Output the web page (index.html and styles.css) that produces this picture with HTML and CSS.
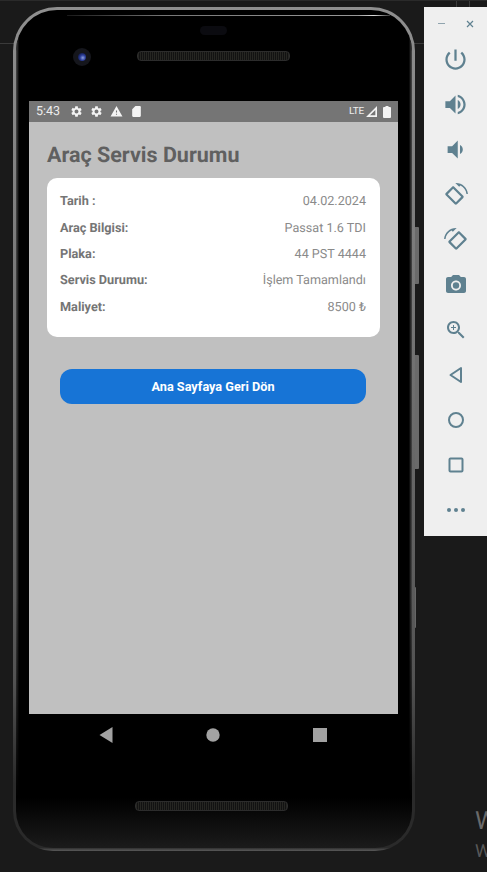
FILE: index.html
```html
<!DOCTYPE html>
<html lang="en">
<head>
    <meta charset="UTF-8">
    <meta name="viewport" content="width=device-width, initial-scale=1.0">
    <title>Araç Servis Durumu</title>
    <link rel="stylesheet" href="styles.css">
</head>
<body>
    <div class="desktop">
        <div class="grid-line line-left"></div>
        <div class="grid-line line-right"></div>
        <div class="grid-line line-top-a"></div>
        <div class="grid-line line-top-b"></div>

        <!-- emulator window -->
        <div class="phone">
            <div class="side-key key-one"></div>
            <div class="side-key key-two"></div>
            <div class="side-key key-three"></div>
            <div class="top-glint"></div>
            <div class="bezel-top">
                <div class="sensor"></div>
                <div class="camera"><span class="lens"></span></div>
                <div class="speaker speaker-top"></div>
            </div>
            <div class="screen">
                <div class="status-bar">
                    <span class="clock">5:43</span>
                    <svg class="status-icon" viewBox="0 0 24 24"><path d="M19.14 12.94c.04-.3.06-.61.06-.94 0-.32-.02-.64-.07-.94l2.03-1.58c.18-.14.23-.41.12-.61l-1.92-3.32c-.12-.22-.37-.29-.59-.22l-2.39.96c-.5-.38-1.03-.7-1.62-.94l-.36-2.54c-.04-.24-.24-.41-.48-.41h-3.84c-.24 0-.43.17-.47.41l-.36 2.54c-.59.24-1.13.57-1.62.94l-2.39-.96c-.22-.08-.47 0-.59.22L2.74 8.87c-.12.21-.08.47.12.61l2.03 1.58c-.05.3-.09.63-.09.94s.02.64.07.94l-2.03 1.58c-.18.14-.23.41-.12.61l1.92 3.32c.12.22.37.29.59.22l2.39-.96c.5.38 1.03.7 1.62.94l.36 2.54c.05.24.24.41.48.41h3.84c.24 0 .44-.17.47-.41l.36-2.54c.59-.24 1.13-.56 1.62-.94l2.39.96c.22.08.47 0 .59-.22l1.92-3.32c.12-.22.07-.47-.12-.61l-2.01-1.58zM12 15.6c-1.98 0-3.6-1.62-3.6-3.6s1.62-3.6 3.6-3.6 3.6 1.62 3.6 3.6-1.62 3.6-3.6 3.6z"/></svg>
                    <svg class="status-icon" viewBox="0 0 24 24"><path d="M19.14 12.94c.04-.3.06-.61.06-.94 0-.32-.02-.64-.07-.94l2.03-1.58c.18-.14.23-.41.12-.61l-1.92-3.32c-.12-.22-.37-.29-.59-.22l-2.39.96c-.5-.38-1.03-.7-1.62-.94l-.36-2.54c-.04-.24-.24-.41-.48-.41h-3.84c-.24 0-.43.17-.47.41l-.36 2.54c-.59.24-1.13.57-1.62.94l-2.39-.96c-.22-.08-.47 0-.59.22L2.74 8.87c-.12.21-.08.47.12.61l2.03 1.58c-.05.3-.09.63-.09.94s.02.64.07.94l-2.03 1.58c-.18.14-.23.41-.12.61l1.92 3.32c.12.22.37.29.59.22l2.39-.96c.5.38 1.03.7 1.62.94l.36 2.54c.05.24.24.41.48.41h3.84c.24 0 .44-.17.47-.41l.36-2.54c.59-.24 1.13-.56 1.62-.94l2.39.96c.22.08.47 0 .59-.22l1.92-3.32c.12-.22.07-.47-.12-.61l-2.01-1.58zM12 15.6c-1.98 0-3.6-1.62-3.6-3.6s1.62-3.6 3.6-3.6 3.6 1.62 3.6 3.6-1.62 3.6-3.6 3.6z"/></svg>
                    <svg class="status-icon" viewBox="0 0 24 24"><path d="M1 21h22L12 2 1 21zm12-3h-2v-2h2v2zm0-4h-2v-4h2v4z"/></svg>
                    <svg class="status-icon" viewBox="0 0 24 24"><path d="M18 2h-8L4 8v12c0 1.1.9 2 2 2h12c1.1 0 2-.9 2-2V4c0-1.1-.9-2-2-2z"/></svg>
                    <span class="status-gap"></span>
                    <span class="lte">LTE</span>
                    <svg class="signal" viewBox="0 0 12 12"><path d="M12 0V12H0ZM10.200 4.400V10.200H4.400Z" fill-rule="evenodd"/></svg>
                    <svg class="battery" viewBox="0 0 8 12"><path d="M2.500 0h3v1H7a1 1 0 0 1 1 1v9a1 1 0 0 1-1 1H1a1 1 0 0 1-1-1V2a1 1 0 0 1 1-1h1.500z"/></svg>
                </div>
                <div class="app">
                    <h1 class="page-title">Araç Servis Durumu</h1>
                    <div class="card">
                        <div class="row"><span class="label">Tarih :</span><span class="value">04.02.2024</span></div>
                        <div class="row"><span class="label">Araç Bilgisi:</span><span class="value">Passat 1.6 TDI</span></div>
                        <div class="row"><span class="label">Plaka:</span><span class="value">44 PST 4444</span></div>
                        <div class="row"><span class="label">Servis Durumu:</span><span class="value">İşlem Tamamlandı</span></div>
                        <div class="row"><span class="label">Maliyet:</span><span class="value">8500 ₺</span></div>
                    </div>
                    <button class="back-button">Ana Sayfaya Geri Dön</button>
                </div>
            </div>
            <div class="bezel-bottom">
                <div class="nav-bar">
                    <svg class="nav-icon nav-back" viewBox="0 0 14 16"><path d="M13.500 0V16L0.500 8Z"/></svg>
                    <svg class="nav-icon" viewBox="0 0 14 14"><circle cx="7" cy="7" r="6.700"/></svg>
                    <svg class="nav-icon" viewBox="0 0 14 14"><rect width="14" height="14"/></svg>
                </div>
                <div class="speaker speaker-bottom"></div>
            </div>
        </div>

        <!-- emulator side toolbar -->
        <div class="toolbar">
            <div class="toolbar-head">
                <span class="minimize"></span>
                <svg class="close" viewBox="0 0 8 8"><path d="M1 1L7 7M7 1L1 7"/></svg>
            </div>
            <div class="tool"><svg class="large" viewBox="0 0 24 24"><path d="M13 3h-2v10h2V3zm4.830 2.170l-1.420 1.420C17.990 7.860 19 9.810 19 12c0 3.870-3.130 7-7 7s-7-3.130-7-7c0-2.190 1.010-4.140 2.580-5.420L6.170 5.170C4.230 6.820 3 9.260 3 12c0 4.970 4.030 9 9 9s9-4.030 9-9c0-2.740-1.230-5.180-3.170-6.830z"/></svg></div>
            <div class="tool"><svg class="large" viewBox="0 0 24 24"><path d="M3 9v6h4l5 5V4L7 9H3zm13.500 3c0-1.770-1.020-3.290-2.500-4.030v8.050c1.480-.73 2.500-2.250 2.500-4.020zM14 3.230v2.060c2.890.86 5 3.540 5 6.710s-2.110 5.850-5 6.710v2.060c4.010-.91 7-4.490 7-8.770s-2.990-7.860-7-8.770z"/></svg></div>
            <div class="tool"><svg class="large" viewBox="0 0 24 24"><path d="M18.500 12c0-1.770-1.020-3.290-2.500-4.030v8.050c1.480-.73 2.500-2.250 2.500-4.020zM5 9v6h4l5 5V4L9 9H5z"/></svg></div>
            <div class="tool"><svg viewBox="0 0 24 24"><path d="M16.480 2.520c3.270 1.550 5.610 4.720 5.970 8.480h1.500C23.440 4.840 18.290 0 12 0l-.66.030 3.810 3.810 1.330-1.320z"/><path d="M10.230 3.750c-.59-.59-1.540-.59-2.120 0L1.750 10.110c-.59.59-.59 1.540 0 2.120l9.020 9.020c.59.59 1.540.59 2.120 0l6.360-6.360c.59-.59.59-1.540 0-2.120L10.230 3.750zm1.600 15.440L3.810 11.170l5.360-5.360 8.020 8.020-5.360 5.360z"/></svg></div>
            <div class="tool"><svg class="flipped" viewBox="0 0 24 24"><path d="M16.480 2.520c3.270 1.550 5.610 4.720 5.970 8.480h1.500C23.440 4.840 18.290 0 12 0l-.66.030 3.810 3.810 1.330-1.320z"/><path d="M10.230 3.750c-.59-.59-1.540-.59-2.120 0L1.750 10.110c-.59.59-.59 1.540 0 2.120l9.020 9.020c.59.59 1.540.59 2.120 0l6.360-6.360c.59-.59.59-1.540 0-2.120L10.230 3.750zm1.600 15.440L3.810 11.170l5.360-5.360 8.020 8.020-5.360 5.360z"/></svg></div>
            <div class="tool"><svg viewBox="0 0 24 24"><circle cx="12" cy="12.500" r="3.200"/><path d="M9 2L7.170 4H4c-1.100 0-2 .9-2 2v12c0 1.100.9 2 2 2h16c1.100 0 2-.9 2-2V6c0-1.100-.9-2-2-2h-3.170L15 2H9zm3 15.500c-2.760 0-5-2.240-5-5s2.240-5 5-5 5 2.240 5 5-2.240 5-5 5z"/></svg></div>
            <div class="tool"><svg viewBox="0 0 24 24"><path d="M15.500 14h-.79l-.28-.27C15.410 12.590 16 11.110 16 9.500 16 5.910 13.090 3 9.500 3S3 5.910 3 9.500 5.910 16 9.500 16c1.610 0 3.090-.59 4.230-1.570l.27.28v.79l5 4.990L20.490 19l-4.990-5zm-6 0C7.010 14 5 11.990 5 9.500S7.010 5 9.500 5 14 7.010 14 9.500 11.990 14 9.500 14z"/><path d="M12 10h-2v2H9v-2H7V9h2V7h1v2h2v1z"/></svg></div>
            <div class="tool"><svg class="outline" viewBox="0 0 24 24"><path d="M17 5V19L6.500 12Z"/></svg></div>
            <div class="tool"><svg class="outline" viewBox="0 0 24 24"><circle cx="12" cy="12" r="7"/></svg></div>
            <div class="tool"><svg class="outline" viewBox="0 0 24 24"><rect x="5.500" y="5.500" width="13" height="13" rx="1"/></svg></div>
            <div class="tool"><svg viewBox="0 0 24 24"><circle cx="5" cy="12" r="2"/><circle cx="12" cy="12" r="2"/><circle cx="19" cy="12" r="2"/></svg></div>
        </div>

        <div class="watermark">
            <div class="watermark-title">Windows'u Etkinleştir</div>
            <div class="watermark-sub">Windows'u etkinleştirmek için</div>
        </div>
    </div>
</body>
</html>
```

FILE: styles.css
```css
html, body {
    margin: 0;
    height: 100%;
    overflow: hidden;
    background-color: #1a1a1a;
}
.desktop {
    position: relative;
    width: 487px;
    height: 872px;
    overflow: hidden;
    font-family: Roboto, "Liberation Sans", sans-serif;
    text-rendering: geometricPrecision;
    background-color: #1a1a1a;
    border-top: 1px solid #2a2a2a;
    box-sizing: border-box;
}
.grid-line {
    position: absolute;
    background-color: #3a3a3a;
}
.line-left { left: 0; top: 42px; width: 14px; height: 1px; }
.line-right { left: 414px; top: 42px; width: 10px; height: 1px; }
.line-top-a { left: 456px; top: 0; width: 1px; height: 6px; }
.line-top-b { left: 469px; top: 0; width: 1px; height: 6px; }

/* phone */
.phone {
    position: absolute;
    left: 13px;
    top: 6px;
    width: 402px;
    height: 844px;
    box-sizing: border-box;
    display: flex;
    flex-direction: column;
    padding: 0 14px 0 13px;
    border: 3px solid transparent;
    border-radius: 44px 44px 40px 40px;
    background:
        linear-gradient(#000 0, #000 94%, #1b1b1b 100%) padding-box,
        linear-gradient(#8f8f8f 0, #737373 40%, #525252 80%, #2a2a2a 92%, #2a2a2a 99.6%, #5a5a5a 100%) border-box;
}
/* soft inner edge of the frame, fades out towards the bottom */
.phone::before {
    content: "";
    position: absolute;
    inset: 0;
    border-radius: 41px 41px 37px 37px;
    background: linear-gradient(90deg, #4a4a4a 0, #1c1c1c 2px, transparent 3px, transparent calc(100% - 3px), #1c1c1c calc(100% - 2px), #4a4a4a 100%);
    -webkit-mask-image: linear-gradient(#000 70%, transparent 94%);
    mask-image: linear-gradient(#000 70%, transparent 94%);
}
.top-glint {
    position: absolute;
    left: 51px;
    right: 22px;
    top: 5px;
    height: 1px;
    background: linear-gradient(90deg, #1a1a1a, #777 30%, #999 90%, #ddd 95%, #333);
}
.side-key {
    position: absolute;
    left: 399px;
    width: 4px;
    background-color: #6a6a6a;
    border-radius: 0 1px 1px 0;
}
.key-one { top: 217px; height: 57px; }
.key-two { top: 345px; height: 114px; }
.key-three { top: 577px; height: 41px; width: 1px; background-color: #666; }
.bezel-top {
    position: relative;
    height: 91px;
    flex: none;
}
.sensor {
    position: absolute;
    left: 171px;
    top: 16px;
    width: 27px;
    height: 9px;
    border-radius: 5px;
    background-color: #0b0b10;
}
.camera {
    position: absolute;
    left: 44px;
    top: 38px;
    width: 18px;
    height: 18px;
    border-radius: 50%;
    background-color: #15161c;
    display: flex;
    align-items: center;
    justify-content: center;
}
.lens {
    width: 8px;
    height: 8px;
    border-radius: 50%;
    background: radial-gradient(circle at 60% 60%, #8ea2e0 0, #2b3d9a 40%, #0a0e2a 90%);
}
.speaker {
    height: 8px;
    border-radius: 4px;
    border: 1px solid #2c2c2c;
    background: repeating-linear-gradient(90deg, #262622 0, #262622 1px, #121212 1px, #121212 2px);
}
.speaker-top {
    position: absolute;
    left: 108px;
    top: 41px;
    width: 151px;
}
.screen {
    flex: none;
    height: 613px;
    display: flex;
    flex-direction: column;
    background-color: #c0c0c0;
}
.status-bar {
    height: 21px;
    flex: none;
    display: flex;
    align-items: center;
    padding: 0 7px;
    background-color: #757575;
    color: #ededed;
}
.clock {
    font-size: 12.5px;
    width: 34px;
}
.status-icon {
    width: 13px;
    height: 13px;
    margin-right: 7px;
    fill: #f4f4f4;
}
.status-gap {
    flex: 1;
}
.lte {
    font-size: 10px;
    letter-spacing: -0.2px;
    margin-right: 2px;
}
.signal {
    width: 11px;
    height: 11px;
    fill: #f4f4f4;
    margin-right: 6px;
}
.battery {
    width: 8px;
    height: 12px;
    fill: #f4f4f4;
}
.app {
    flex: 1;
    padding: 0 18px;
}
.page-title {
    margin: 22px 0 11px;
    font-size: 21.5px;
    line-height: 23px;
    font-weight: 700;
    color: #606060;
}
.card {
    height: 159px;
    box-sizing: border-box;
    padding: 10.5px 14px 0 13px;
    background-color: #fff;
    border-radius: 10px;
}
.row {
    height: 26.4px;
    display: flex;
    align-items: center;
    justify-content: space-between;
    font-size: 12.6px;
    color: #757575;
}
.label {
    font-weight: 700;
    font-size: 12.7px;
}
.value {
    color: #8a8a8a;
}
.back-button {
    display: block;
    width: 306px;
    height: 35px;
    margin: 32px 0 0 13px;
    border: none;
    border-radius: 12px;
    background-color: #1774d6;
    color: #fff;
    font-family: inherit;
    font-size: 12.7px;
    font-weight: 700;
}
.bezel-bottom {
    flex: 1;
    position: relative;
}
.nav-bar {
    display: flex;
    justify-content: space-between;
    align-items: center;
    height: 42px;
    padding: 0 71.5px 0 70px;
}
.nav-icon {
    width: 14px;
    height: 14px;
    fill: #a2a2a2;
}
.nav-back {
    height: 16px;
}
.speaker-bottom {
    position: absolute;
    left: 106px;
    top: 87px;
    width: 151px;
}

/* toolbar */
.toolbar {
    position: absolute;
    left: 424px;
    top: 6px;
    width: 63px;
    height: 529px;
    background-color: #efefef;
}
.toolbar-head {
    height: 30px;
    display: flex;
    align-items: center;
    justify-content: space-between;
    padding: 3px 13px 0 14px;
    box-sizing: border-box;
}
.minimize {
    width: 7px;
    height: 1.500px;
    background-color: #90a4ae;
}
.close {
    width: 8px;
    height: 8px;
    fill: none;
    stroke: #5f8190;
    stroke-width: 1.200;
}
.tool {
    height: 45px;
    display: flex;
    align-items: center;
    justify-content: center;
}
.tool svg {
    width: 24px;
    height: 24px;
    fill: #5f8190;
}
.tool svg.large {
    width: 27px;
    height: 27px;
}
.tool svg.outline {
    fill: none;
    stroke: #5f8190;
    stroke-width: 2;
    stroke-linejoin: round;
}
.tool svg.flipped {
    transform: scaleX(-1);
}

.watermark {
    position: absolute;
    left: 475px;
    top: 806px;
    white-space: nowrap;
}
.watermark-title {
    font-size: 25px;
    line-height: 30px;
    color: #6a6a6a;
}
.watermark-sub {
    font-size: 18px;
    line-height: 30px;
    color: #585858;
}
```
